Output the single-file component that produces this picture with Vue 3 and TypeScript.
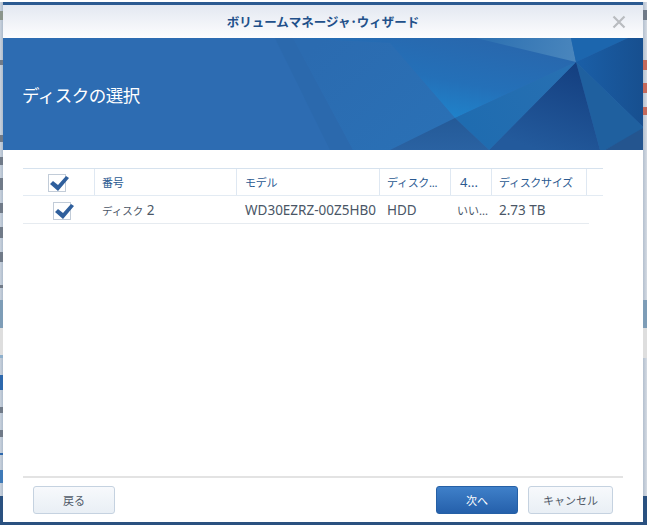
<script setup lang="ts">
interface Cell { text: string; width: number; cls?: string; suffix?: string }
type Mark = [number, number, string]

const cols: Cell[] = [
  { text: '番号', width: 142 },
  { text: 'モデル', width: 143 },
  { text: 'ディスク...', width: 71 },
  { text: '4...', width: 41, cls: 'latin' },
  { text: 'ディスクサイズ', width: 95 },
]
const cells: Cell[] = [
  { text: 'ディスク', suffix: ' 2', width: 142 },
  { text: 'WD30EZRZ-00Z5HB0', width: 143 },
  { text: 'HDD', width: 71 },
  { text: 'いい...', width: 41, cls: 'center' },
  { text: '2.73 TB', width: 89 },
]

const INK = '#707a88'
const RED = '#c46a5c'
const STEEL = '#7e9db7'
const PALE = '#dedede'
const NAVY = '#2a5180'

function toSegments(marks: Mark[]) {
  let y = 2
  const out: { height: string; background: string }[] = []
  for (const [start, end, color] of marks) {
    if (start > y) out.push({ height: start - y + 'px', background: 'transparent' })
    out.push({ height: end - start + 'px', background: color })
    y = end
  }
  return out
}

const leftSegments = toSegments([
  [11, 20, '#8b958c'], [60, 65, INK], [135, 142, INK],
  [157, 165, INK], [178, 190, INK], [203, 213, INK], [227, 238, INK], [252, 262, INK], [285, 288, INK],
  [300, 328, STEEL], [328, 355, PALE], [355, 358, '#8fb0cc'],
  [375, 390, '#2d68ad'], [407, 413, INK], [430, 437, INK], [453, 455, '#2d68ad'],
  [470, 483, '#3f7ab8'], [496, 522, NAVY],
])
const rightSegments = toSegments([
  [10, 20, INK], [60, 70, RED], [83, 93, RED], [107, 115, RED],
  [300, 328, STEEL], [328, 358, PALE], [496, 522, NAVY],
])
</script>

<template>
  <div class="screen">
    <div class="middle">
      <div class="strip left">
        <span v-for="(s, i) in leftSegments" :key="i" class="seg" :style="s"></span>
      </div>

      <section class="dialog">
        <header class="titlebar">
          <h1 class="title">ボリュームマネージャ･ウィザード</h1>
          <svg class="close" viewBox="0 0 14 14" width="14" height="14" aria-hidden="true">
            <path d="M1.5 1.5 L12.5 12.5 M12.5 1.5 L1.5 12.5" stroke="#b9bcc0" stroke-width="2.2" fill="none" />
          </svg>
        </header>

        <div class="banner">
          <svg class="art" viewBox="3 38 640 112" preserveAspectRatio="none" aria-hidden="true">
            <defs>
              <linearGradient id="gMain" gradientUnits="userSpaceOnUse" x1="470" y1="40" x2="455" y2="118">
                <stop offset="0" stop-color="#2868ae" />
                <stop offset="0.55" stop-color="#2470b8" />
                <stop offset="1" stop-color="#1f82ca" />
              </linearGradient>
              <linearGradient id="gLeft" gradientUnits="userSpaceOnUse" x1="320" y1="40" x2="420" y2="150">
                <stop offset="0" stop-color="#2b6bb0" />
                <stop offset="1" stop-color="#2a70b5" />
              </linearGradient>
              <linearGradient id="gDark" gradientUnits="userSpaceOnUse" x1="570" y1="62" x2="540" y2="150">
                <stop offset="0" stop-color="#143f80" />
                <stop offset="1" stop-color="#235a9c" />
              </linearGradient>
              <linearGradient id="gLight" gradientUnits="userSpaceOnUse" x1="490" y1="38" x2="575" y2="60">
                <stop offset="0" stop-color="#2f72b2" />
                <stop offset="1" stop-color="#4a86bd" />
              </linearGradient>
              <linearGradient id="gRight" gradientUnits="userSpaceOnUse" x1="580" y1="60" x2="643" y2="60">
                <stop offset="0" stop-color="#1a5ea6" />
                <stop offset="1" stop-color="#174f8f" />
              </linearGradient>
              <linearGradient id="gMid" gradientUnits="userSpaceOnUse" x1="576" y1="62" x2="470" y2="130">
                <stop offset="0" stop-color="#2870b2" />
                <stop offset="1" stop-color="#1f6cb0" />
              </linearGradient>
              <linearGradient id="gLow" gradientUnits="userSpaceOnUse" x1="440" y1="118" x2="440" y2="150">
                <stop offset="0" stop-color="#245a98" />
                <stop offset="1" stop-color="#2a62a2" />
              </linearGradient>
            </defs>
            <polygon points="275,38 293,38 353,150 330,150" fill="#2b69ad" />
            <polygon points="293,38 390,43 455,118 390,150 353,150" fill="url(#gLeft)" />
            <polygon points="293,38 571,38 576,62 455,118 390,43" fill="url(#gMain)" />
            <polygon points="476,38 571,38 576,62" fill="url(#gLight)" />
            <polygon points="571,38 628,38 576,62" fill="#1c66ae" />
            <polygon points="628,38 643,38 643,127 576,62" fill="url(#gRight)" />
            <polygon points="576,62 643,127 643,129 605,150 600,150" fill="#1f609f" />
            <polygon points="643,128 643,150 605,150" fill="#24558f" />
            <polygon points="576,62 600,150 489,150" fill="url(#gDark)" />
            <polygon points="576,62 489,150 455,118" fill="url(#gMid)" />
            <polygon points="455,118 489,150 390,150" fill="url(#gLow)" />
          </svg>
          <h2 class="heading">ディスクの選択</h2>
        </div>

        <div class="content">
          <div class="table">
            <div class="thead">
              <div class="check-cell head-check">
                <span class="check big">
                  <svg viewBox="0 0 20 18" width="20" height="18" aria-hidden="true">
                    <polygon points="1,9 4,6 9,10 17,1 20,3 9,16" fill="#2f5f9c" />
                  </svg>
                </span>
              </div>
              <div v-for="c in cols" :key="c.text" class="th" :class="c.cls" :style="{ width: c.width + 'px' }">{{ c.text }}</div>
            </div>
            <div class="tr">
              <div class="check-cell">
                <span class="check small">
                  <svg viewBox="0 0 20 18" width="20" height="18" aria-hidden="true">
                    <polygon points="1,9 4,6 9,10 17,1 20,3 9,16" fill="#2f5f9c" />
                  </svg>
                </span>
              </div>
              <div v-for="c in cells" :key="c.text" class="td" :class="c.cls" :style="{ width: c.width + 'px' }"><span v-if="c.suffix" class="kana">{{ c.text }}</span><template v-else>{{ c.text }}</template>{{ c.suffix }}</div>
            </div>
          </div>
        </div>

        <footer class="footer">
          <button class="btn" type="button">戻る</button>
          <div class="actions">
            <button class="btn primary" type="button">次へ</button>
            <button class="btn wide" type="button">キャンセル</button>
          </div>
        </footer>
      </section>

      <div class="strip right">
        <span v-for="(s, i) in rightSegments" :key="i" class="seg" :style="s"></span>
      </div>
    </div>
    <div class="bottom"></div>
  </div>
</template>

<style>
html, body { margin: 0; background: #fff; }
</style>

<style scoped>
.screen {
  width: 647px;
  height: 525px;
  display: flex;
  flex-direction: column;
  overflow: hidden;
  font-family: "Noto Sans CJK JP", "Noto Sans", sans-serif;
  background: #fff;
}
.middle {
  display: flex;
  height: 522px;
  padding-top: 2px;
  box-sizing: border-box;
}
.strip {
  display: flex;
  flex-direction: column;
  overflow: hidden;
  flex: none;
  background: linear-gradient(90deg, #c9d2dd, #aebccc);
}
.strip.left { width: 3px; }
.strip.right { width: 4px; background: linear-gradient(90deg, #b4c0cf, #d5dbe3); }
.seg { display: block; flex: none; width: 100%; }

.dialog {
  width: 640px;
  flex: none;
  display: flex;
  flex-direction: column;
  background: #fff;
  border-top: 3px solid #2b5a91;
  box-sizing: border-box;
}
.titlebar {
  height: 33px;
  flex: none;
  display: flex;
  align-items: center;
  justify-content: center;
  position: relative;
  background: linear-gradient(180deg, #e3e8f1, #fdfdfe);
}
.title {
  margin: 0;
  font-size: 12.5px;
  font-weight: 700;
  color: #22508a;
}
.close { position: absolute; right: 17px; top: 10px; }
.banner {
  height: 112px;
  flex: none;
  position: relative;
  display: flex;
  align-items: center;
  background: #2d6cb2;
  overflow: hidden;
}
.art { position: absolute; inset: 0; width: 100%; height: 100%; }
.heading {
  position: relative;
  margin: 0 0 0 19px;
  font-size: 17.5px;
  letter-spacing: -0.5px;
  font-weight: 400;
  color: #fff;
}
.content {
  flex: 1;
  padding: 18px 20px 0;
  min-height: 0;
}
.table { width: 580px; }
.thead {
  display: flex;
  height: 28px;
  box-sizing: border-box;
  border-top: 1px solid #d6e2ee;
  border-bottom: 1px solid #e3ebf3;
  width: 580px;
}
.tr {
  display: flex;
  height: 28px;
  box-sizing: border-box;
  border-bottom: 1px solid #e6ebf0;
  width: 566px;
}
.check-cell {
  width: 72px;
  flex: none;
  display: flex;
  align-items: center;
  justify-content: center;
  box-sizing: border-box;
}
.check {
  box-sizing: border-box;
  width: 18px;
  height: 18px;
  border: 1px solid #c2ccd8;
  position: relative;
  display: block;
  background: #fff;
}
.check.big { margin-left: -4px; margin-top: 1px; }
.check.small { margin-left: 5px; margin-top: 2px; }
.check svg { position: absolute; left: 0; top: 0; }
.head-check { border-right: 1px solid #dfe8f2; }
.th {
  flex: none;
  box-sizing: border-box;
  padding-left: 7px;
  border-right: 1px solid #dfe8f2;
  font-size: 11px;
  letter-spacing: -0.3px;
  line-height: 27px;
  color: #2b5a91;
  white-space: nowrap;
  overflow: hidden;
}
.th.latin {
  padding-left: 9px;
  font-size: 13px;
  letter-spacing: 0;
  font-family: "Noto Sans", sans-serif;
}
.th:nth-child(3), .td:nth-child(3) { padding-left: 8px; }
.td {
  flex: none;
  box-sizing: border-box;
  padding-left: 7px;
  font-size: 13.5px;
  line-height: 28px;
  color: #4a5666;
  white-space: nowrap;
  overflow: hidden;
  font-family: "Noto Sans", "Noto Sans CJK JP", sans-serif;
}
.kana { font-size: 10.5px; font-family: "Noto Sans CJK JP", sans-serif; }
.td.center { padding-left: 6px; font-size: 11px; font-family: "Noto Sans CJK JP", sans-serif; }
.footer {
  flex: none;
  height: 46px;
  box-sizing: border-box;
  margin: 0 20px;
  border-top: 2px solid #e3e3e3;
  display: flex;
  justify-content: space-between;
  align-items: flex-start;
  padding: 8px 10px 0;
}
.actions { display: flex; gap: 10px; }
.btn {
  width: 82px;
  height: 28px;
  box-sizing: border-box;
  border: 1px solid #c5d2e0;
  border-radius: 3px;
  background: linear-gradient(180deg, #f7f9fc, #e9eff5);
  font-family: "Noto Sans CJK JP", sans-serif;
  font-size: 11px;
  color: #505a68;
  padding: 0;
}
.btn.wide { width: 85px; }
.btn.primary {
  border-color: #2560a6;
  background: linear-gradient(180deg, #3f80c9, #2560ab);
  color: #fff;
}
.bottom { height: 3px; flex: none; background: #2a5180; }
</style>
